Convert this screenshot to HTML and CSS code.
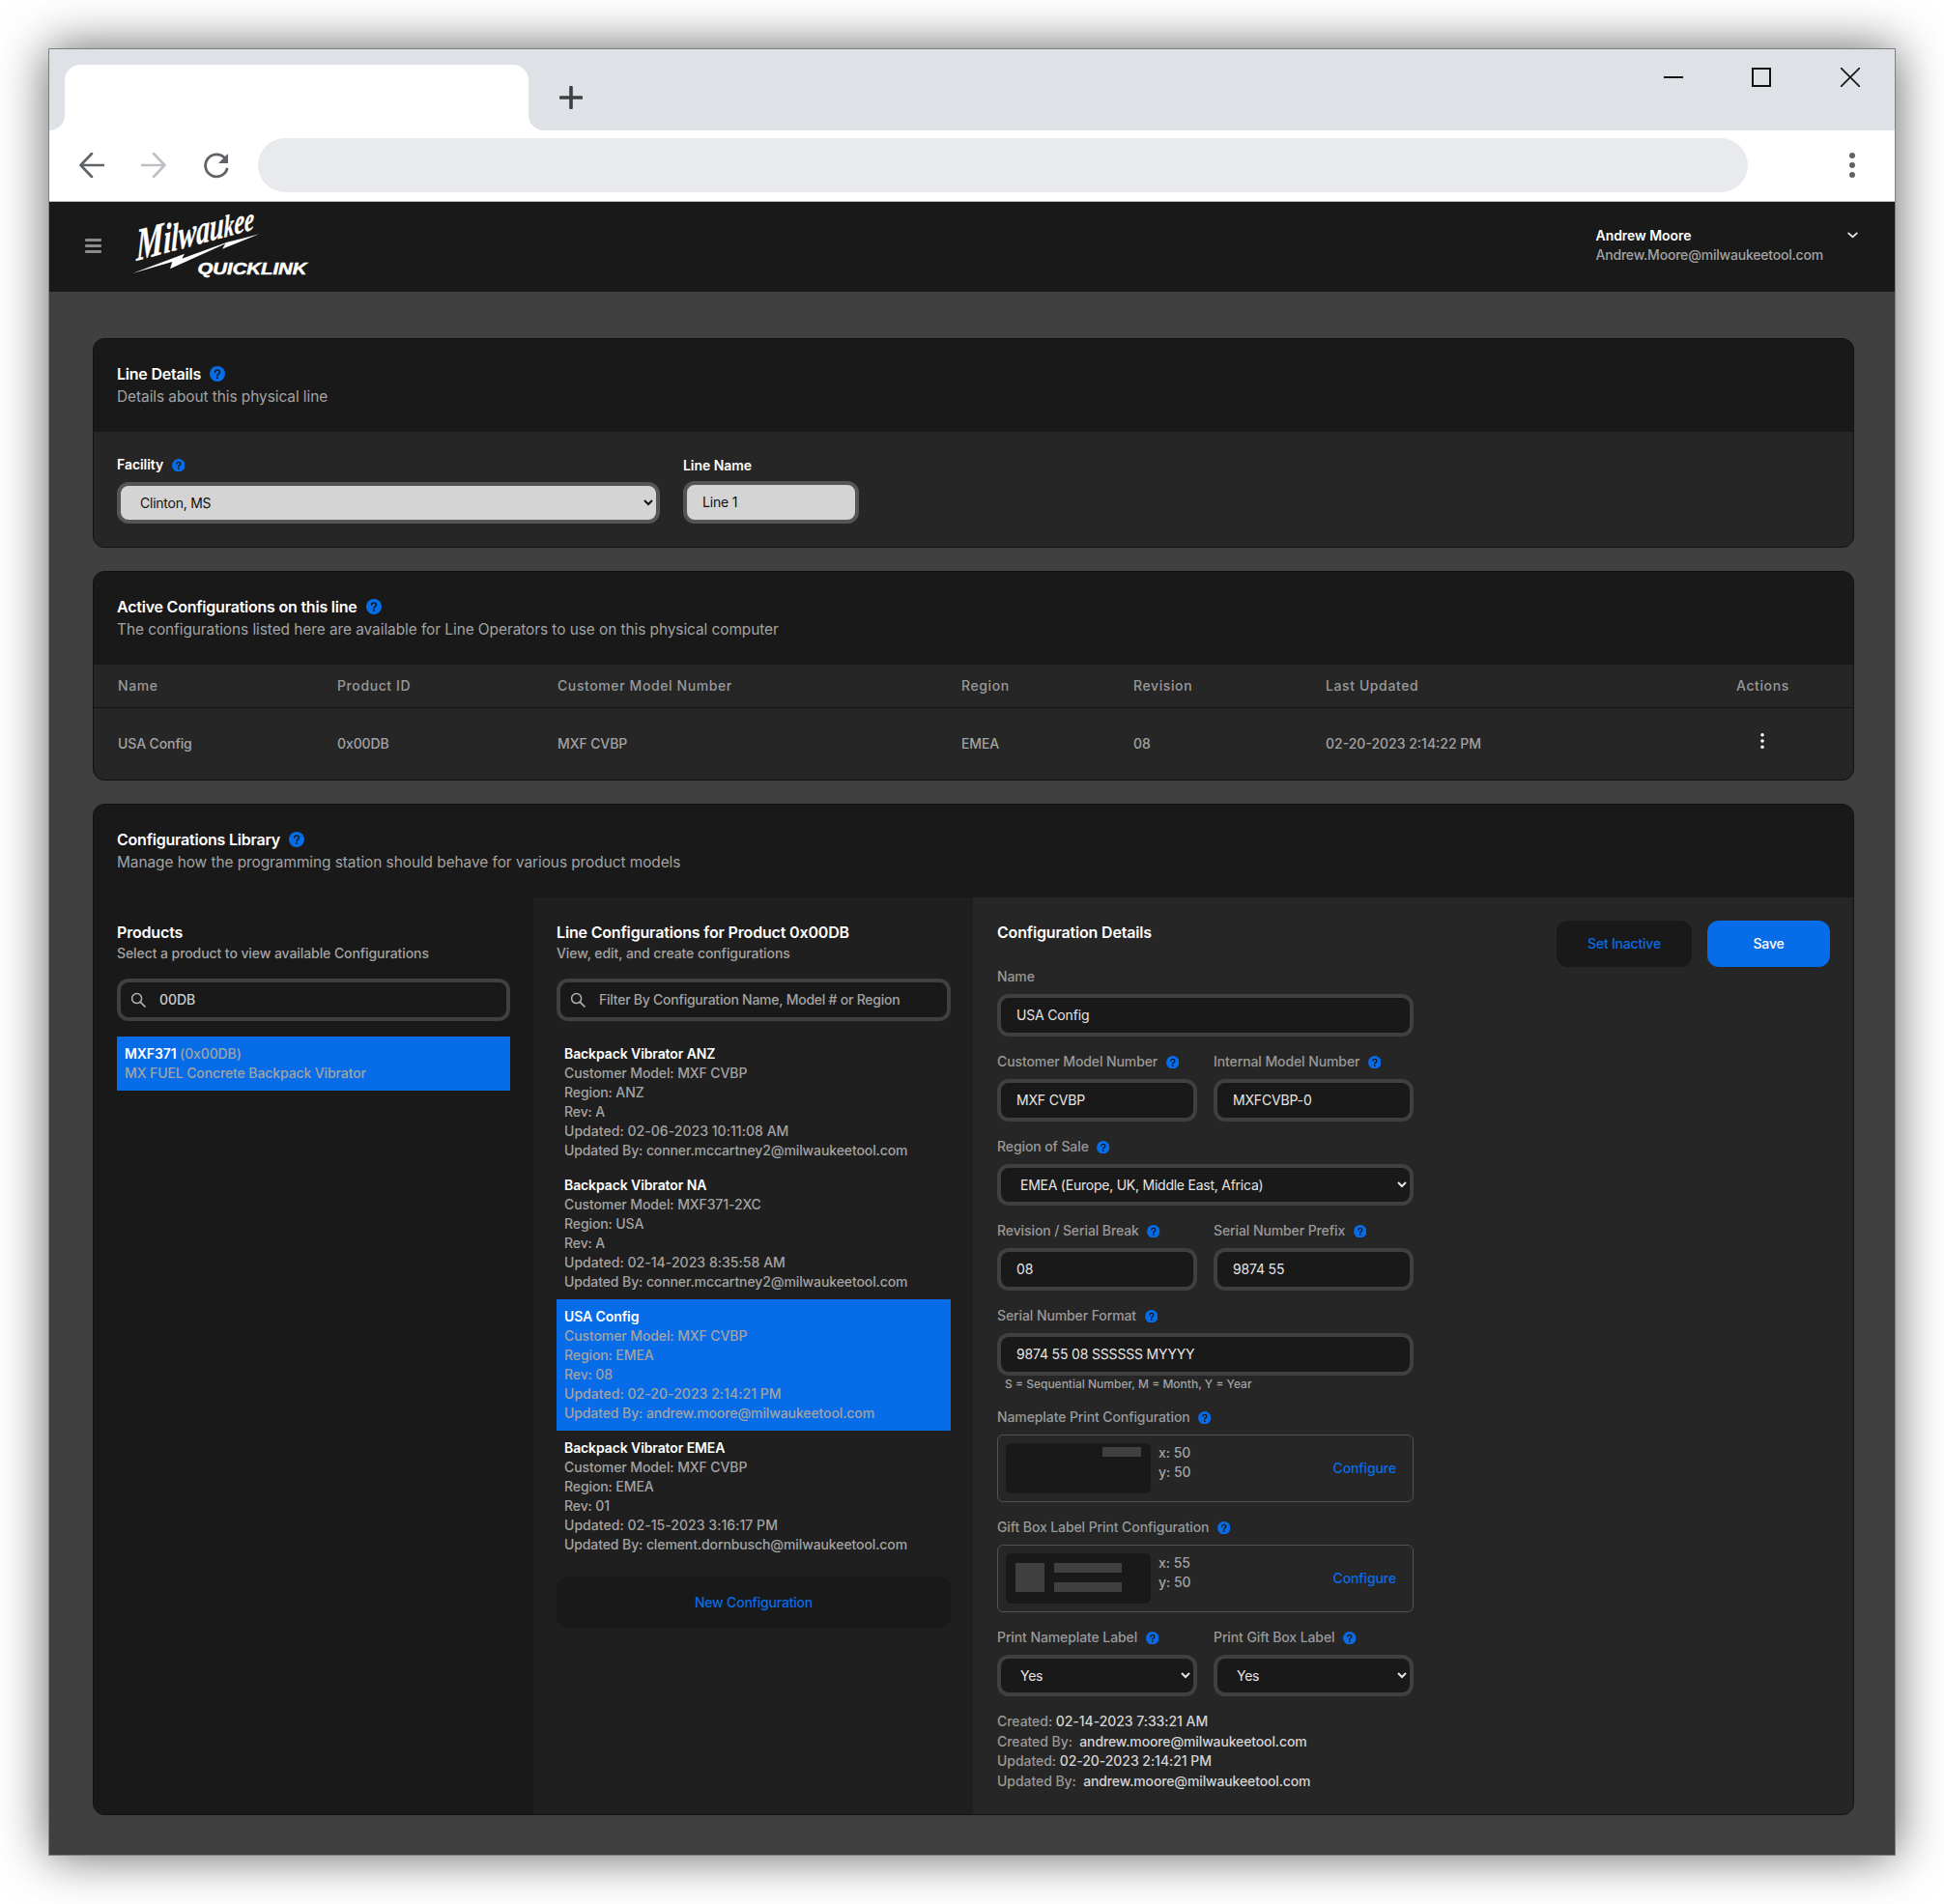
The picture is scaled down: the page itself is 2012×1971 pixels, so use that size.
FILE: index.html
```html
<!DOCTYPE html>
<html lang="en">
<head>
<meta charset="utf-8">
<title>Milwaukee QuickLink</title>
<link rel="stylesheet" href="styles.css">
</head>
<body>
<svg class="defs" width="0" height="0" aria-hidden="true">
  <symbol id="help" viewBox="0 0 16 16">
    <circle cx="8" cy="8" r="8" fill="#076ce8"/>
    <path d="M5.600 6.100C5.700 4.800 6.700 4 8 4c1.400 0 2.400.9 2.400 2.100 0 1-.6 1.500-1.300 2-.7.4-1.100.8-1.100 1.600" fill="none" stroke="#191919" stroke-width="1.600" stroke-linecap="round"/>
    <circle cx="8" cy="12" r="1" fill="#191919"/>
  </symbol>
  <symbol id="search" viewBox="0 0 16 16">
    <circle cx="6.600" cy="6.600" r="5" fill="none" stroke="#b0b0b0" stroke-width="1.500"/>
    <path d="M10.400 10.400 15 15" fill="none" stroke="#b0b0b0" stroke-width="1.700" stroke-linecap="round"/>
  </symbol>
</svg>

<div class="window">
  <div class="tabstrip">
    <div class="strip-left"></div>
    <div class="tab-wrap"><div class="tab"></div></div>
    <div class="strip-right">
      <svg class="plus" viewBox="0 0 24 24" width="24" height="24"><path d="M12 1.500v21M1.500 12h21" stroke="#3c4043" stroke-width="3.600" stroke-linecap="round" fill="none"/></svg>
      <div class="win-controls">
        <svg viewBox="0 0 20 20" width="20" height="20"><path d="M0 10h20" stroke="#111" stroke-width="2" fill="none"/></svg>
        <svg viewBox="0 0 20 20" width="20" height="20"><rect x="1" y="1" width="18" height="18" stroke="#111" stroke-width="2" fill="none"/></svg>
        <svg viewBox="0 0 20 20" width="20" height="20"><path d="M0 0l20 20M20 0 0 20" stroke="#111" stroke-width="1.600" fill="none"/></svg>
      </div>
    </div>
  </div>

  <div class="toolbar">
    <svg class="nav" viewBox="0 0 26 26" width="26" height="26"><path d="M25 13H2M13 1 1.500 13 13 25" stroke="#5f6368" stroke-width="2.600" stroke-linecap="round" stroke-linejoin="round" fill="none"/></svg>
    <svg class="nav" viewBox="0 0 26 26" width="26" height="26"><path d="M1 13h23M13 1l11.500 12L13 25" stroke="#bdc1c6" stroke-width="2.600" stroke-linecap="round" stroke-linejoin="round" fill="none"/></svg>
    <svg class="nav" viewBox="0 0 27 27" width="27" height="27"><path d="M22.500 5.500A11.500 11.500 0 1 0 25 17" stroke="#5f6368" stroke-width="2.800" stroke-linecap="round" fill="none"/><path d="M26 1v10H16z" fill="#5f6368"/></svg>
    <div class="address"></div>
    <div class="kebab"><i></i><i></i><i></i></div>
  </div>

  <header class="appbar">
    <div class="burger"><i></i><i></i><i></i></div>
    <svg class="logo" viewBox="0 0 184 64" width="184" height="64">
      <text class="logo-script" transform="translate(4 48) skewY(-15)" textLength="122" lengthAdjust="spacingAndGlyphs"><tspan class="s48">M</tspan><tspan class="s44">i</tspan><tspan class="s40">l</tspan><tspan class="s42">wa</tspan><tspan class="s40">u</tspan><tspan class="s32">k</tspan><tspan class="s36">e</tspan><tspan class="s34">e</tspan></text>
      <path d="M0 61 54 40.700 51.300 45.700 98 28.700 131.300 20.300 93 35.700 96.300 30.300 39 56.300 41.300 49Z" fill="#fff"/>
      <text class="logo-quick" x="67.500" y="62" textLength="113" lengthAdjust="spacingAndGlyphs">QUICKLINK</text>
    </svg>
    <div class="user">
      <div class="user-name">Andrew Moore</div>
      <div class="user-mail">Andrew.Moore@milwaukeetool.com</div>
    </div>
    <svg class="user-chev" viewBox="0 0 12 8" width="11" height="7"><path d="M1 1.500 6 6l5-4.500" stroke="#e5e5e5" stroke-width="2" fill="none" stroke-linecap="round" stroke-linejoin="round"/></svg>
  </header>

  <main class="main">
    <section class="card">
      <div class="card-head">
        <div class="card-title">Line Details <svg class="help-lg"><use href="#help"/></svg></div>
        <div class="card-sub">Details about this physical line</div>
      </div>
      <div class="line-form">
        <div class="field facility">
          <label class="lbl-strong">Facility <svg class="help"><use href="#help"/></svg></label>
          <select class="ctl ctl-light"><option>Clinton, MS</option></select>
        </div>
        <div class="field linename">
          <label class="lbl-strong lbl-low">Line Name</label>
          <div class="ctl ctl-light">Line 1</div>
        </div>
      </div>
    </section>

    <section class="card">
      <div class="card-head">
        <div class="card-title">Active Configurations on this line <svg class="help-lg"><use href="#help"/></svg></div>
        <div class="card-sub">The configurations listed here are available for Line Operators to use on this physical computer</div>
      </div>
      <div class="tbl-row tbl-head">
        <span>Name</span><span>Product ID</span><span>Customer Model Number</span><span>Region</span><span>Revision</span><span>Last Updated</span><span class="tbl-act">Actions</span>
      </div>
      <div class="tbl-row tbl-body">
        <span>USA Config</span><span>0x00DB</span><span>MXF CVBP</span><span>EMEA</span><span>08</span><span class="tbl-date">02-20-2023 2:14:22 PM</span>
        <span class="tbl-act"><svg viewBox="0 0 6 20" width="6" height="18"><circle cx="3" cy="3" r="2" fill="#fff"/><circle cx="3" cy="10" r="2" fill="#fff"/><circle cx="3" cy="17" r="2" fill="#fff"/></svg></span>
      </div>
    </section>

    <section class="card">
      <div class="card-head">
        <div class="card-title">Configurations Library <svg class="help-lg"><use href="#help"/></svg></div>
        <div class="card-sub">Manage how the programming station should behave for various product models</div>
      </div>
      <div class="library">
        <div class="col col-products">
          <h3 class="col-title">Products</h3>
          <p class="col-sub">Select a product to view available Configurations</p>
          <div class="searchbox"><svg class="search-ico"><use href="#search"/></svg><span class="search-val">00DB</span></div>
          <div class="product-item"><div><b>MXF371</b> (0x00DB)</div><div>MX FUEL Concrete Backpack Vibrator</div></div>
        </div>

        <div class="col col-configs">
          <h3 class="col-title">Line Configurations for Product 0x00DB</h3>
          <p class="col-sub">View, edit, and create configurations</p>
          <div class="searchbox"><svg class="search-ico"><use href="#search"/></svg><span class="search-ph">Filter By Configuration Name, Model # or Region</span></div>
          <div class="cfg-list">
            <div class="cfg"><b>Backpack Vibrator ANZ</b><span>Customer Model: MXF CVBP</span><span>Region: ANZ</span><span>Rev: A</span><span class="cfg-date">Updated: 02-06-2023 10:11:08 AM</span><span>Updated By: conner.mccartney2@milwaukeetool.com</span></div>
            <div class="cfg"><b>Backpack Vibrator NA</b><span>Customer Model: MXF371-2XC</span><span>Region: USA</span><span>Rev: A</span><span class="cfg-date">Updated: 02-14-2023 8:35:58 AM</span><span>Updated By: conner.mccartney2@milwaukeetool.com</span></div>
            <div class="cfg cfg-on"><b>USA Config</b><span>Customer Model: MXF CVBP</span><span>Region: EMEA</span><span>Rev: 08</span><span class="cfg-date">Updated: 02-20-2023 2:14:21 PM</span><span>Updated By: andrew.moore@milwaukeetool.com</span></div>
            <div class="cfg"><b>Backpack Vibrator EMEA</b><span>Customer Model: MXF CVBP</span><span>Region: EMEA</span><span>Rev: 01</span><span class="cfg-date">Updated: 02-15-2023 3:16:17 PM</span><span>Updated By: clement.dornbusch@milwaukeetool.com</span></div>
          </div>
          <div class="btn btn-new">New Configuration</div>
        </div>

        <div class="col col-detail">
          <div class="detail-form">
            <h3 class="col-title detail-title">Configuration Details</h3>
            <div class="field"><label class="lbl">Name</label><div class="ctl">USA Config</div></div>
            <div class="pair">
              <div class="field"><label class="lbl">Customer Model Number <svg class="help"><use href="#help"/></svg></label><div class="ctl">MXF CVBP</div></div>
              <div class="field"><label class="lbl">Internal Model Number <svg class="help"><use href="#help"/></svg></label><div class="ctl">MXFCVBP-0</div></div>
            </div>
            <div class="field"><label class="lbl">Region of Sale <svg class="help"><use href="#help"/></svg></label>
              <select class="ctl"><option>EMEA (Europe, UK, Middle East, Africa)</option></select></div>
            <div class="pair">
              <div class="field"><label class="lbl">Revision / Serial Break <svg class="help"><use href="#help"/></svg></label><div class="ctl">08</div></div>
              <div class="field"><label class="lbl">Serial Number Prefix <svg class="help"><use href="#help"/></svg></label><div class="ctl">9874 55</div></div>
            </div>
            <div class="field"><label class="lbl">Serial Number Format <svg class="help"><use href="#help"/></svg></label><div class="ctl">9874 55 08 SSSSSS MYYYY</div>
              <div class="hint">S = Sequential Number, M = Month, Y = Year</div></div>
            <div class="field"><label class="lbl">Nameplate Print Configuration <svg class="help"><use href="#help"/></svg></label>
              <div class="print-box">
                <div class="preview preview-a"><i class="pv-tag"></i></div>
                <div class="coords"><div>x: 50</div><div>y: 50</div></div>
                <span class="link">Configure</span>
              </div></div>
            <div class="field"><label class="lbl">Gift Box Label Print Configuration <svg class="help"><use href="#help"/></svg></label>
              <div class="print-box">
                <div class="preview preview-b"><i class="pv-square"></i><div class="pv-lines"><i></i><i></i></div></div>
                <div class="coords"><div>x: 55</div><div>y: 50</div></div>
                <span class="link">Configure</span>
              </div></div>
            <div class="pair">
              <div class="field"><label class="lbl">Print Nameplate Label <svg class="help"><use href="#help"/></svg></label><select class="ctl"><option>Yes</option></select></div>
              <div class="field"><label class="lbl">Print Gift Box Label <svg class="help"><use href="#help"/></svg></label><select class="ctl"><option>Yes</option></select></div>
            </div>
            <div class="meta">
              <div>Created: <b>02-14-2023 7:33:21 AM</b></div>
              <div>Created By: &nbsp;<b class="meta-mail">andrew.moore@milwaukeetool.com</b></div>
              <div>Updated: <b>02-20-2023 2:14:21 PM</b></div>
              <div>Updated By: &nbsp;<b class="meta-mail">andrew.moore@milwaukeetool.com</b></div>
            </div>
          </div>
          <div class="detail-actions">
            <div class="btn btn-inactive">Set Inactive</div>
            <div class="btn btn-save">Save</div>
          </div>
        </div>
      </div>
    </section>
  </main>
</div>
</body>
</html>
```
FILE: styles.css
```css
* { box-sizing: border-box; }
html, body { margin: 0; }
body {
  background: #fff;
  padding: 50px;
  font-family: Inter, "Liberation Sans", sans-serif;
  font-size: 14px;
  font-weight: 450;
  line-height: 20px;
  letter-spacing: -.05px;
  color: #a3a3a3;
}
.defs { display: block; }
.window {
  width: 1912px;
  height: 1871px;
  border: 1px solid #808080;
  background: #404040;
  box-shadow: 0 0 48px rgba(0, 0, 0, .62);
  display: flex;
  flex-direction: column;
}

/* browser chrome */
.tabstrip { display: flex; height: 84px; background: #fff; flex: none; }
.strip-left { width: 16px; background: #dee1e6; border-bottom-right-radius: 16px; }
.tab-wrap { width: 480px; background: #dee1e6; padding-top: 16px; }
.tab { height: 68px; background: #fff; border-radius: 16px 16px 0 0; }
.strip-right {
  flex: 1;
  background: #dee1e6;
  border-bottom-left-radius: 16px;
  display: flex;
  justify-content: space-between;
  align-items: flex-start;
  padding: 38px 36px 0 32px;
}
.win-controls { display: flex; gap: 72px; margin-top: -19px; }
.win-controls svg:first-child { margin-right: -1px; }
.toolbar {
  display: flex;
  align-items: center;
  height: 74px;
  flex: none;
  background: #fff;
  border-bottom: 1px solid #bdbdbd;
  padding: 0 41px 1px 31px;
}
.nav { flex: none; margin-right: 38px; }
.nav + .nav + .nav { margin-right: 30px; }
.address { width: 1542px; height: 56px; background: #e8eaed; border-radius: 28px; }
.kebab { margin-left: auto; display: flex; flex-direction: column; gap: 4px; }
.kebab i { display: block; width: 6px; height: 6px; border-radius: 50%; background: #5f6368; }

/* app bar */
.appbar {
  height: 93px;
  flex: none;
  background: #191919;
  display: flex;
  align-items: flex-start;
  padding-left: 37px;
}
.burger { display: flex; flex-direction: column; gap: 3px; margin-top: 38px; width: 17px; }
.burger i { display: block; height: 3px; background: #8a8a8a; border-radius: 1px; }
.logo { margin-left: 32px; margin-top: 13px; flex: none; overflow: visible; }
.logo-script {
  font-family: "Liberation Serif", serif;
  font-weight: 700;
  font-style: italic;
  letter-spacing: 0;
  fill: #fff;
  stroke: #fff;
  stroke-width: .35px;
}
.s48 { font-size: 48px; }
.s44 { font-size: 44px; }
.s42 { font-size: 42px; }
.s40 { font-size: 40px; }
.s36 { font-size: 36px; }
.s34 { font-size: 34px; }
.s32 { font-size: 32px; }
.logo-quick {
  font-family: "Liberation Sans", sans-serif;
  font-weight: 700;
  font-style: italic;
  font-size: 16.500px;
  letter-spacing: 0;
  fill: #fff;
  stroke: #fff;
  stroke-width: .5px;
}
.user { margin-left: auto; padding-top: 25px; }
.user-name { color: #fff; font-weight: 600; }
.user-mail { color: #a3a3a3; letter-spacing: -.2px; }
.user-chev { margin: 31px 38px 0 25px; flex: none; }

/* main */
.main {
  flex: 1;
  padding: 48px 42px 0 45px;
  display: flex;
  flex-direction: column;
  gap: 24px;
}
.card {
  border: 1px solid #111;
  border-radius: 12px;
  overflow: hidden;
  background: #262626;
}
.card-head { height: 96px; background: #191919; padding: 24px 24px 0; font-size: 16px; line-height: 24px; }
.card-title { color: #fff; font-weight: 600; letter-spacing: -.22px; display: flex; align-items: center; gap: 9px; }
.card-sub { color: #a3a3a3; font-size: 15.400px; font-weight: 400; }
.help-lg { width: 16px; height: 16px; flex: none; }
.help { width: 13.500px; height: 13.500px; flex: none; margin-left: 5px; vertical-align: -2px; }

.line-form { display: flex; gap: 24px; padding: 24px; height: 119px; }
.facility { width: 562px; }
.linename { width: 182px; }
.field { display: flex; flex-direction: column; min-width: 0; }
.lbl-strong { color: #fff; font-weight: 600; height: 28px; line-height: 20px; }
.lbl-low { line-height: 22px; height: 27px; }
.lbl { color: #999; font-weight: 500; height: 20px; line-height: 20px; letter-spacing: -.1px; }

.ctl {
  display: block;
  width: 100%;
  height: 44px;
  border: 4px solid #404040;
  border-radius: 12px;
  background: #191919;
  color: #e5e5e5;
  font: 400 14px/36px Inter, "Liberation Sans", sans-serif;
  letter-spacing: -.17px;
  padding: 0 16px;
}
select.ctl { height: 43px; line-height: 20px; letter-spacing: -.24px; }
.ctl-light { background: #d4d4d4; color: #111; border-color: #555; }

/* table */
.tbl-row {
  display: grid;
  grid-template-columns: 227px 228px 418px 178px 199px 1fr 121px;
  padding-left: 25px;
  align-items: center;
  color: #a3a3a3;
}
.tbl-head { height: 45px; border-bottom: 1px solid #141414; letter-spacing: .6px; font-weight: 500; color: #999; }
.tbl-body { height: 74px; letter-spacing: -.1px; }
.tbl-date { letter-spacing: 0; }
.tbl-act { text-align: left; }
.tbl-body .tbl-act { padding-left: 24px; margin-top: -6px; line-height: 0; }

/* library */
.library { display: flex; height: 949px; }
.col { flex: none; }
.col-products { width: 455px; background: #191919; padding: 24px 24px 0; }
.col-configs { width: 455px; background: #1f1f1f; padding: 24px 23px 0 24px; }
.col-detail { flex: 1; background: #262626; padding: 24px 24px 0 25px; display: flex; justify-content: space-between; align-items: flex-start; }
.col-title { margin: 0; color: #fff; font-size: 16px; font-weight: 600; line-height: 24px; letter-spacing: -.17px; }
.col-sub { margin: 0 0 16px; height: 20px; font-size: 14px; line-height: 20px; color: #a3a3a3; letter-spacing: -.08px; }
.searchbox {
  height: 44px;
  border: 4px solid #404040;
  border-radius: 12px;
  display: flex;
  align-items: center;
  padding-left: 10px;
  background: #191919;
}
.search-ico { width: 16px; height: 16px; flex: none; margin-right: 14px; }
.search-val { color: #ccc; }
.search-ph { color: #a3a3a3; letter-spacing: -.24px; }
.product-item {
  margin-top: 16px;
  height: 56px;
  padding: 8px;
  background: #076ce8;
  color: #a3a3a3;
  letter-spacing: -.11px;
}
.product-item b { color: #fff; font-weight: 600; }
.cfg-list { margin-top: 16px; }
.cfg { height: 136px; padding: 8px; display: flex; flex-direction: column; color: #a3a3a3; letter-spacing: -.1px; }
.cfg b { color: #fff; font-weight: 600; }
.cfg-date { letter-spacing: .04px; }
.cfg-on { background: #076ce8; }
.btn { display: flex; align-items: center; justify-content: center; border-radius: 12px; letter-spacing: -.2px; }
.btn-new { height: 53px; margin-top: 15px; background: #191919; color: #076ce8; }

/* detail */
.detail-form { width: 431px; display: flex; flex-direction: column; gap: 16px; }
.detail-title { height: 24px; margin-bottom: 8px; }
.detail-form .field { gap: 8px; }
.pair { display: grid; grid-template-columns: 207px 207px; column-gap: 17px; }
.hint { font-size: 12px; line-height: 16px; color: #a3a3a3; padding-left: 8px; margin-top: -7px; height: 16px; letter-spacing: 0; }
.print-box {
  height: 70px;
  border: 1px solid #525252;
  border-radius: 6px;
  padding: 8px;
  display: flex;
  align-items: center;
}
.preview { width: 150px; height: 52px; background: #191919; border-radius: 6px; flex: none; }
.preview-a { display: flex; justify-content: flex-end; padding: 4px 10px; }
.pv-tag { display: block; width: 40px; height: 10px; background: #404040; }
.preview-b { display: flex; padding: 10px; gap: 10px; }
.pv-square { display: block; width: 30px; height: 30px; background: #404040; }
.pv-lines { display: flex; flex-direction: column; gap: 10px; }
.pv-lines i { display: block; width: 70px; height: 10px; background: #404040; }
.coords { margin-left: 8px; color: #a3a3a3; align-self: flex-start; }
.link { margin-left: auto; margin-right: 9px; color: #076ce8; letter-spacing: -.12px; }
.meta { line-height: 20.500px; color: #999; }
.meta b { color: #d4d4d4; font-weight: 500; }
.meta .meta-mail { letter-spacing: -.13px; }
.detail-actions { display: flex; gap: 16px; }
.btn-inactive { width: 140px; height: 48px; background: #191919; color: #076ce8; }
.btn-save { width: 127px; height: 48px; background: #076ce8; color: #fff; font-weight: 500; }
```
